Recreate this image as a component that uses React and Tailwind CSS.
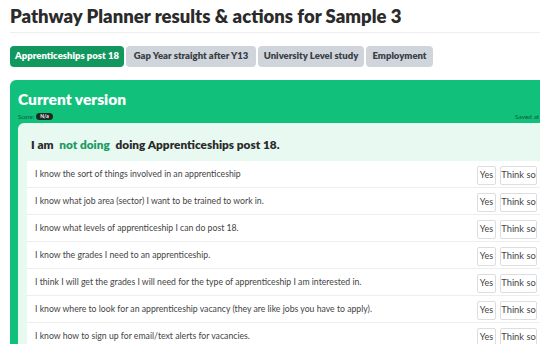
import React from "react";

const questions = [
  "I know the sort of things involved in an apprenticeship",
  "I know what job area (sector) I want to be trained to work in.",
  "I know what levels of apprenticeship I can do post 18.",
  "I know the grades I need to an apprenticeship.",
  "I think I will get the grades I will need for the type of apprenticeship I am interested in.",
  "I know where to look for an apprenticeship vacancy (they are like jobs you have to apply).",
  "I know how to sign up for email/text alerts for vacancies.",
];

const tabs = [
  { label: "Apprenticeships post 18", active: true, w: "w-[114px]" },
  { label: "Gap Year straight after Y13", active: false, w: "w-[130px]" },
  { label: "University Level study", active: false, w: "w-[106px]" },
  { label: "Employment", active: false, w: "w-[67px]" },
];

const heading = { fontFamily: "Lato, 'Open Sans', sans-serif" };
const body = { fontFamily: "Lato, 'Open Sans', sans-serif" };

const App = () => {
  return (
    <div className="w-[540px] h-[344px] overflow-hidden bg-white">
      <div className="w-[620px] pl-[10px]">
        <h1 className="pt-[5px] text-[18.5px] leading-[22px] font-extrabold text-[#2b2b2b] whitespace-nowrap" style={heading}>
          Pathway Planner results &amp; actions for Sample 3
        </h1>
        <div className="mt-[5px] h-px bg-[#eeeeee]" />

        {/* tabs */}
        <div className="flex gap-[2px] mt-[13px]">
          {tabs.map((t) => (
            <div
              key={t.label}
              className={`${t.w} h-[21px] rounded-[4px] flex items-center justify-center whitespace-nowrap text-[9.5px] font-extrabold ${
                t.active ? "bg-[#12975f] text-white" : "bg-[#d0d5db] text-[#3a3f45]"
              }`}
              style={heading}
            >
              {t.label}
            </div>
          ))}
        </div>

        {/* green card */}
        <div className="mt-[13px] bg-[#10c07b] rounded-tl-[6px] pl-[8px]">
          <div className="flex items-end">
            <div className="w-[497px] pt-[8px]">
              <div className="text-[15.5px] leading-[22px] font-extrabold text-white" style={heading}>
                Current version
              </div>
              <div className="flex items-center gap-[2px] h-[13px] text-[6px] text-[#135a3a]" style={body}>
                <span>Score:</span>
                <span className="bg-[#1d2a24] text-white font-bold rounded-full px-[4px] h-[7px] leading-[7px] text-[5px]">
                  N/a
                </span>
              </div>
            </div>
            <div className="h-[13px] flex items-center whitespace-nowrap text-[6.5px] text-[#135a3a]" style={body}>
              Saved at
            </div>
          </div>

          <div className="bg-[#e8f9f1] rounded-tl-[6px] pl-[9px] pb-4">
            <div className="h-[38px] flex items-end pb-[7px] pl-[4px] text-[11.8px] font-extrabold text-[#2b2b2b] whitespace-nowrap" style={heading}>
              I am&nbsp;
              <span className="text-[#1c9b62] mx-[3px]">not doing</span>
              &nbsp;doing Apprenticeships post 18.
            </div>
            <div className="bg-white">
              {questions.map((q) => (
                <div
                  key={q}
                  className="h-[27px] flex items-center justify-between border-b border-[#eeeeee] pl-[8px] pr-[83px]"
                >
                  <span className="text-[8.7px] text-[#444444] whitespace-nowrap" style={body}>
                    {q}
                  </span>
                  <div className="flex gap-[4px] mt-[2px]">
                    <span
                      className="h-[19px] w-[19px] flex items-center justify-center border border-[#dddddd] rounded-[2px] text-[9px] text-[#444] whitespace-nowrap"
                      style={body}
                    >
                      Yes
                    </span>
                    <span
                      className="h-[19px] w-[37px] flex items-center justify-center border border-[#dddddd] rounded-[2px] text-[9.3px] text-[#444] whitespace-nowrap"
                      style={body}
                    >
                      Think so
                    </span>
                  </div>
                </div>
              ))}
            </div>
          </div>
        </div>
      </div>
    </div>
  );
};

export default App;
